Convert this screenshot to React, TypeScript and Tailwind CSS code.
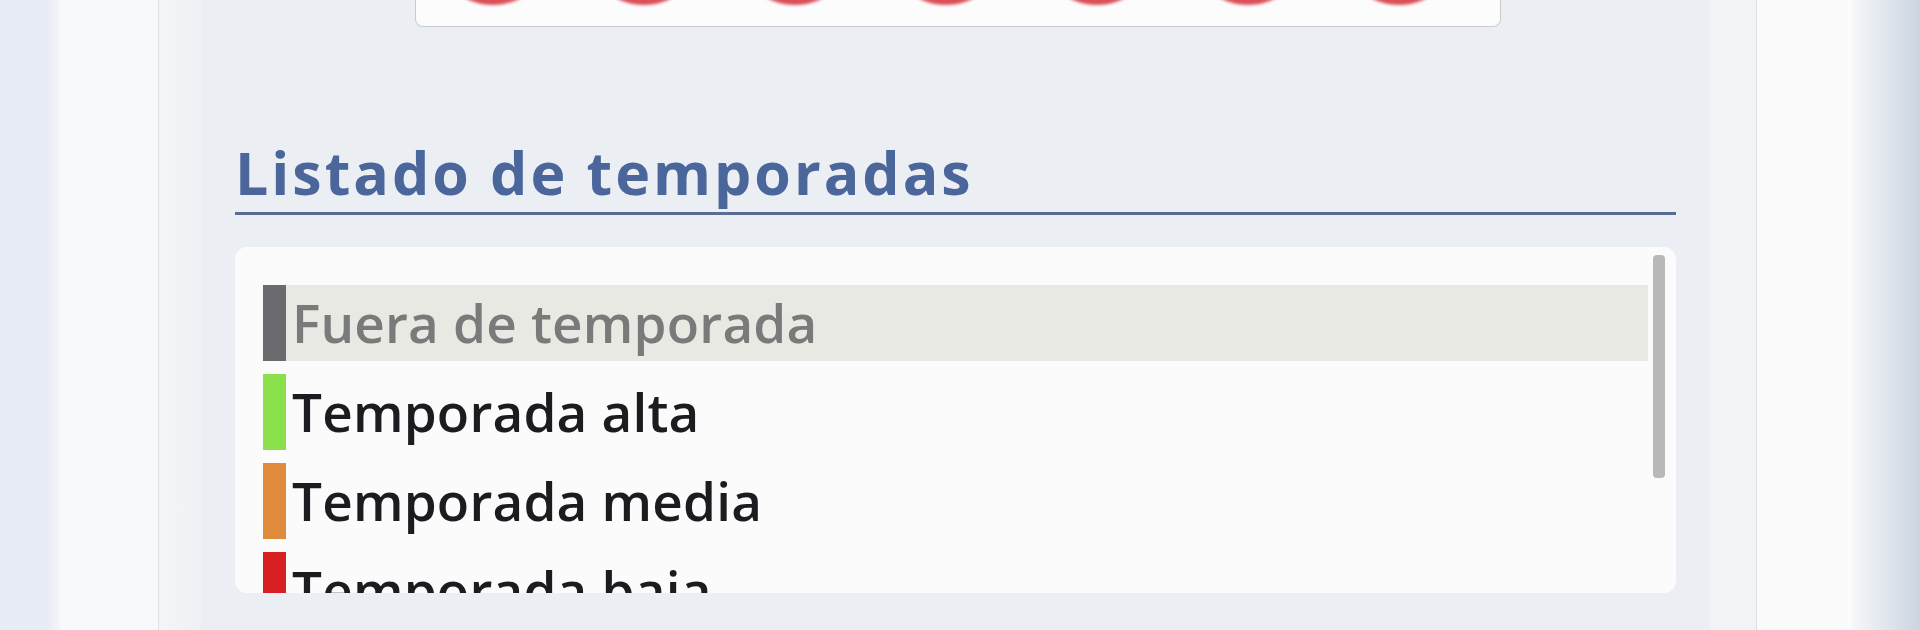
import React from 'react';

type Season = { name: string; color: string; selected?: boolean };

const seasons: Season[] = [
  { name: 'Fuera de temporada', color: 'bg-[#6b6b6f]', selected: true },
  { name: 'Temporada alta', color: 'bg-[#8ae04a]' },
  { name: 'Temporada media', color: 'bg-[#e08a3b]' },
  { name: 'Temporada baja', color: 'bg-[#d81f22]' },
];

const App = () => {
  return (
    <div className="flex h-[630px] w-[1920px] overflow-hidden bg-[#eef1f6] font-['Open_Sans',sans-serif]">
      {/* left margin + frame */}
      <div className="w-[60px] shrink-0 bg-gradient-to-r from-[#e8edf5] from-80% to-[#f4f6f8]" />
      <div className="w-[99px] shrink-0 border-r border-[#dfe2e6] bg-[#f8f9fa]" />
      <div className="w-[42px] shrink-0 bg-gradient-to-r from-[#f4f5f7] to-[#eef1f5]" />

      {/* panel */}
      <div className="w-[1509px] shrink-0 bg-[#ebeef3]">
        {/* week box, top cut off */}
        <div className="ml-[214px] flex h-[27px] w-[1086px] items-start gap-[31px] overflow-hidden rounded-b-lg border-x border-b border-[#c9ccca] bg-[#fcfcfc] pl-[17px]">
          {[0, 1, 2, 3, 4, 5, 6].map((i) => (
            <div key={i} className="mt-[-115px] h-[120px] w-[120px] shrink-0 rounded-full bg-[#da5059] blur-[1.5px]" />
          ))}
        </div>

        <div className="ml-[34px] w-[1441px]">
          <h2 className="mt-[105px] h-[83px] border-b-[3px] border-[#5a6c96] text-[59px] font-bold leading-[80px] tracking-[3px] text-[#4a669b]">
            Listado de temporadas
          </h2>

          <div className="mt-[32px] flex h-[346px] gap-[5px] overflow-hidden rounded-xl bg-[#fbfbfb] pl-[28px] pr-[11px]">
            <div className="flex flex-1 flex-col gap-[13px] pt-[38px]">
              {seasons.map((s) => (
                <div key={s.name} className="flex h-[76px] shrink-0 items-center">
                  <div className={`h-full w-[23px] shrink-0 ${s.color}`} />
                  <div
                    className={`flex h-full flex-1 items-center pl-[6px] text-[53px] font-semibold tracking-[0.2px] ${
                      s.selected ? 'bg-[#e9e9e4] text-[#7a7a7a]' : 'text-[#1c1c20]'
                    }`}
                  >
                    {s.name}
                  </div>
                </div>
              ))}
            </div>
            <div className="mt-[8px] h-[223px] w-[12px] shrink-0 rounded-sm bg-[#b9b9b9]" />
          </div>
        </div>
      </div>

      {/* right frame */}
      <div className="w-[47px] shrink-0 border-r border-[#dde0e4] bg-[#f1f3f6]" />
      <div className="w-[95px] shrink-0 bg-[#fbfbfc]" />
      <div className="flex-1 bg-gradient-to-r from-[#f6f7f9] to-[#cbd5e1]" />
    </div>
  );
};

export default App;
